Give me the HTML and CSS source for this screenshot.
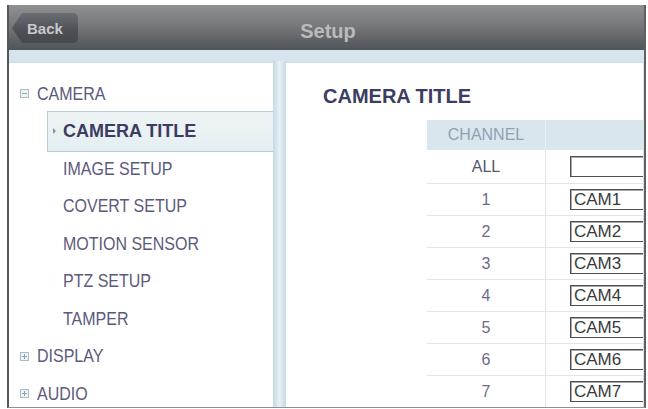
FILE: index.html
```html
<!DOCTYPE html>
<html>
<head>
<meta charset="utf-8">
<link rel="stylesheet" href="styles.css">
</head>
<body>
<div class="frame">
  <header class="topbar">
    <div class="back"><span>Back</span></div>
    <div class="title">Setup</div>
    <div class="spacer"></div>
  </header>
  <div class="body">
    <nav class="menu">
      <div class="group">
        <svg class="tog" width="9" height="9" viewBox="0 0 9 9"><rect x="0.5" y="0.5" width="8" height="8" fill="#eef3f6" stroke="#a9bcc6"/><path d="M2 4.5h5" stroke="#8ea3b0"/></svg>
        <span class="lbl">CAMERA</span>
      </div>
      <div class="sub active"><i class="tri"></i><span class="lbl">CAMERA TITLE</span></div>
      <div class="sub"><i class="tri"></i><span class="lbl">IMAGE SETUP</span></div>
      <div class="sub"><i class="tri"></i><span class="lbl">COVERT SETUP</span></div>
      <div class="sub"><i class="tri"></i><span class="lbl">MOTION SENSOR</span></div>
      <div class="sub"><i class="tri"></i><span class="lbl">PTZ SETUP</span></div>
      <div class="sub"><i class="tri"></i><span class="lbl">TAMPER</span></div>
      <div class="group">
        <svg class="tog" width="9" height="9" viewBox="0 0 9 9"><rect x="0.5" y="0.5" width="8" height="8" fill="#eef3f6" stroke="#a9bcc6"/><path d="M2 4.5h5M4.5 2v5" stroke="#8ea3b0"/></svg>
        <span class="lbl">DISPLAY</span>
      </div>
      <div class="group">
        <svg class="tog" width="9" height="9" viewBox="0 0 9 9"><rect x="0.5" y="0.5" width="8" height="8" fill="#eef3f6" stroke="#a9bcc6"/><path d="M2 4.5h5M4.5 2v5" stroke="#8ea3b0"/></svg>
        <span class="lbl">AUDIO</span>
      </div>
    </nav>
    <div class="divider"></div>
    <main class="content">
      <h1 class="heading">CAMERA TITLE</h1>
      <div class="table">
        <div class="trow thead"><div class="ch">CHANNEL</div><div class="cv"></div></div>
        <div class="trow first"><div class="ch">ALL</div><div class="cv"><div class="box"></div></div></div>
        <div class="trow"><div class="ch">1</div><div class="cv"><div class="box">CAM1</div></div></div>
        <div class="trow"><div class="ch">2</div><div class="cv"><div class="box">CAM2</div></div></div>
        <div class="trow"><div class="ch">3</div><div class="cv"><div class="box">CAM3</div></div></div>
        <div class="trow"><div class="ch">4</div><div class="cv"><div class="box">CAM4</div></div></div>
        <div class="trow"><div class="ch">5</div><div class="cv"><div class="box">CAM5</div></div></div>
        <div class="trow"><div class="ch">6</div><div class="cv"><div class="box">CAM6</div></div></div>
        <div class="trow"><div class="ch">7</div><div class="cv"><div class="box">CAM7</div></div></div>
      </div>
    </main>
  </div>
</div>
</body>
</html>
```

FILE: styles.css
```css
html, body {
  margin: 0;
  padding: 0;
  background: #ffffff;
  overflow: hidden;
}
body {
  font-family: "Liberation Sans", Arial, sans-serif;
  width: 648px;
  height: 409px;
}
.frame {
  margin: 5px 0 0 7px;
  width: 639px;
  height: 403px;
  box-sizing: border-box;
  border-left: 2px solid #55585b;
  border-right: 2px solid #5e6164;
  border-bottom: 1px solid #8e9092;
  display: flex;
  flex-direction: column;
  overflow: hidden;
}
.topbar {
  height: 45px;
  flex: none;
  box-sizing: border-box;
  padding: 8px 0 0 3px;
  background: linear-gradient(#8e9093 0%, #77797c 45%, #5a5d61 85%, #505357 100%);
  display: grid;
  grid-template-columns: 1fr auto 1fr;
  align-items: start;
}
.back {
  justify-self: start;
  width: 66px;
  height: 30px;
  box-sizing: border-box;
  padding-left: 15px;
  display: flex;
  align-items: center;
  background: linear-gradient(#6a6d71, #4c4f53 60%, #45484c);
  border-radius: 0 5px 5px 0;
  clip-path: polygon(10px 0, 100% 0, 100% 100%, 10px 100%, 0 50%);
  color: #c7c9cb;
  font-weight: bold;
  font-size: 15px;
}
.title {
  color: #b9bbbd;
  font-weight: bold;
  font-size: 20px;
  line-height: 24px;
  margin-top: 6px;
}
.body {
  flex: 1;
  display: flex;
  padding: 12px 0 0 0;
  background: #d6e5ed;
  min-height: 0;
}
.menu {
  width: 264px;
  flex: none;
  background: #ffffff;
  border-top: 1px solid #cadce5;
  box-sizing: border-box;
  padding-top: 12px;
  color: #5c5a7c;
  font-size: 16px;
}
.lbl {
  display: inline-block;
  transform: scaleY(1.15);
}
.group {
  height: 37.5px;
  display: flex;
  align-items: center;
  padding-left: 11px;
  gap: 8px;
}
.tog {
  flex: none;
}
.sub {
  height: 37.5px;
  margin-left: 38px;
  box-sizing: border-box;
  padding-left: 5px;
  display: flex;
  align-items: center;
  gap: 7px;
  border: 1px solid transparent;
  border-right: none;
}
.tri {
  width: 0;
  height: 0;
  border-left: 3px solid #8e939c;
  border-top: 3px solid transparent;
  border-bottom: 3px solid transparent;
  visibility: hidden;
}
.sub.active {
  height: 41px;
  margin-top: -2px;
  margin-bottom: -1.5px;
  background: linear-gradient(#eef4f5, #e4eef1);
  border-color: #b7d0d8;
  color: #3c3b62;
  font-weight: bold;
  font-size: 18px;
}
.sub.active .lbl {
  transform: none;
}
.sub.active .tri {
  visibility: visible;
}
.divider {
  width: 13px;
  flex: none;
  margin-top: -1px;
  background: linear-gradient(90deg, #c6dae4 0%, #d9e7ee 30%, #e9f1f5 50%, #d9e7ee 70%, #c6dae4 100%);
}
.content {
  flex: 1;
  min-width: 0;
  background: #ffffff;
  border-top: 1px solid #cadce5;
  margin-right: 1px;
  overflow: hidden;
}
.heading {
  margin: 0;
  padding: 21px 0 0 37px;
  font-size: 20px;
  line-height: 24px;
  font-weight: bold;
  color: #3d3c62;
}
.table {
  margin: 12px 0 0 141px;
  width: 320px;
}
.trow {
  display: grid;
  grid-template-columns: 118px 1fr;
  height: 32px;
  box-sizing: border-box;
  border-top: 1px solid #e2e4e6;
  font-size: 16px;
  color: #6c6c88;
}
.trow.thead {
  height: 30px;
  border-top: none;
  background: #dae6ed;
  color: #8ea1b3;
}
.trow.first {
  height: 33px;
  border-top: none;
  color: #55556e;
}
.ch {
  display: flex;
  align-items: center;
  justify-content: center;
}
.cv {
  border-left: 1px solid #e2e4e6;
  display: flex;
  align-items: center;
  padding-left: 24px;
}
.thead .cv {
  border-left-color: #e8eff3;
}
.box {
  width: 140px;
  height: 21px;
  box-sizing: border-box;
  border: 1px solid #4e4e4e;
  box-shadow: inset 1px 1px 0 #a8a8a8;
  background: #ffffff;
  padding-left: 3px;
  font-size: 17px;
  line-height: 19px;
  color: #3a3a3a;
}
```
